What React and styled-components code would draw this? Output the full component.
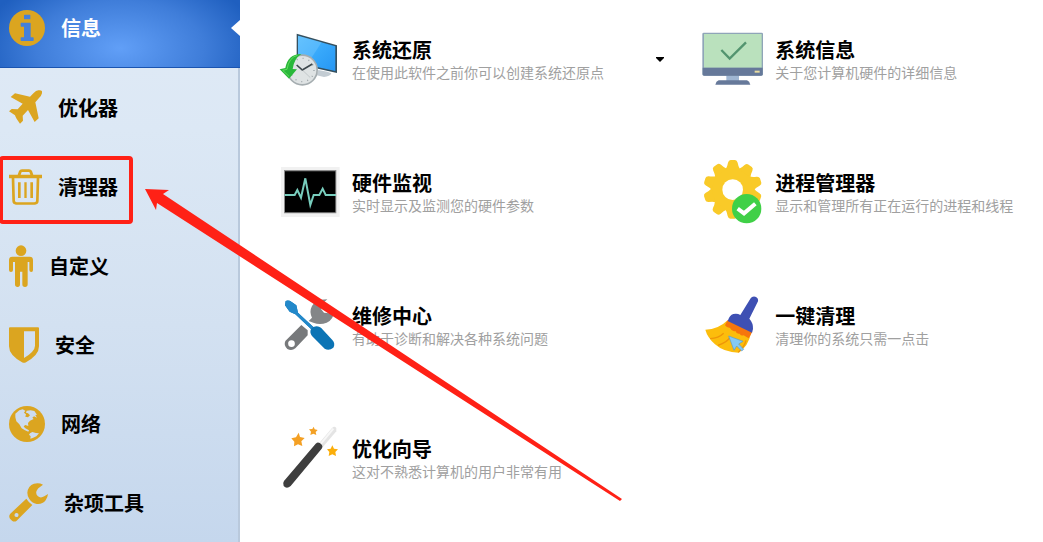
import React, { useState } from 'react';
import styled, { createGlobalStyle } from 'styled-components';

const GlobalStyle = createGlobalStyle`
  * {
    box-sizing: border-box;
  }

  body {
    margin: 0;
    background: #ffffff;
    color: #000000;
    font-family: "Noto Sans CJK SC", "Liberation Sans", sans-serif;
  }

  button {
    font-family: inherit;
    border: none;
    background: none;
    cursor: pointer;
  }
`;

const Page = styled.div`
  position: relative;
  display: flex;
  min-height: 100vh;
`;

const Sidebar = styled.nav`
  flex: 0 0 240px;
  display: flex;
  flex-direction: column;
  background: linear-gradient(to bottom, #e0eaf5 0%, #dce8f5 24%, #d3e1f1 60%, #c5d7ed 100%);
  border-right: 2px solid #b9c9dc;
`;

const NavItem = styled.button`
  position: relative;
  display: flex;
  align-items: center;
  gap: 16px;
  height: 79px;
  padding: 0 0 0 9px;
  color: #000000;
  font-size: 20px;
  font-weight: bold;
  line-height: 24px;
  text-align: left;

  svg {
    display: block;
    flex: none;
    fill: #dba520;
  }

  &.active {
    height: 68px;
    margin-right: -2px;
    padding-bottom: 12px;
    color: #ffffff;
    background: radial-gradient(ellipse 140px 80px at 50% 72%, #619ff7 0%, #3f7dd9 60%, #1f5fbf 100%);
    border-bottom: 1px solid #1a54b0;
  }

  /* notch that points back from the content area */
  &.active::after {
    content: '';
    position: absolute;
    right: 0;
    top: 20px;
    border: solid transparent;
    border-width: 8px 9px 8px 0;
    border-right-color: #ffffff;
  }
`;

const Content = styled.main`
  flex: 1;
  display: grid;
  grid-template-columns: 5fr 4fr;
  grid-auto-rows: 64px;
  row-gap: 69px;
  padding: 29px 2px 20px 39px;
`;

const Tile = styled.div`
  display: flex;
  align-items: center;
  justify-content: space-between;
`;

const TileButton = styled.button`
  display: flex;
  align-items: center;
  gap: 9px;
  padding: 0;
  text-align: left;
  white-space: nowrap;

  svg {
    display: block;
    flex: none;
    overflow: visible;
  }
`;

const TileText = styled.span`
  display: flex;
  flex-direction: column;
`;

const TileTitle = styled.span`
  color: #000000;
  font-size: 20px;
  font-weight: bold;
  line-height: 22px;
`;

const TileNote = styled.span`
  color: #a0a0a0;
  font-size: 14px;
  line-height: 22px;
`;

const MenuButton = styled.button`
  display: flex;
  align-items: center;
  justify-content: center;
  width: 24px;
  height: 24px;
  margin-right: 30px;
  padding: 0 0 3px;
`;

const Overlay = styled.svg`
  position: absolute;
  left: 0;
  top: 0;
  pointer-events: none;
`;

const InfoIcon = () => (
  <svg width="36" height="36" viewBox="28 30 108 108" aria-hidden="true">
    <circle cx="82" cy="84" r="54" />
    <path d="M75 44H90Q92 44 92 46V56Q92 58 90 58H75Q73 58 73 56V46Q73 44 75 44ZM65 68H91Q93 68 93 70V112H100Q102 112 102 114V121Q102 123 100 123H65Q63 123 63 121V114Q63 112 65 112H73V80H65Q63 80 63 78V70Q63 68 65 68Z" fill="#4480db" />
  </svg>
);

const PlaneIcon = () => (
  <svg width="33" height="36" viewBox="27 268 99 108" aria-hidden="true">
    <path d="M126 272Q124 268 115 269Q108 270 101 277L90 288L45 278L32 289L68 309L53 326L35 325L27 332L45 344Q47 352 60 369L69 360L68 345L84 328L104 364L116 353L106 305L117 292Q128 281 126 272Z" />
  </svg>
);

const TrashIcon = () => (
  <svg width="33" height="36" viewBox="27 101 99 108" aria-hidden="true">
    <path d="M27 118H53L57 107Q59 102 66 102H87Q94 102 96 107L100 118H126V129H118L116 198Q115 208 105 208H48Q38 208 37 198L35 129H27ZM62 118H91L88 110H65ZM43 129L45 196Q46 201 51 201H102Q108 201 108 196L110 129Z" fillRule="evenodd" />
    <path d="M54 141H62V188H54ZM73 141H80V188H73ZM91 141H99V188H91Z" />
  </svg>
);

const PersonIcon = () => (
  <svg width="24" height="42" viewBox="27 332 72 126" aria-hidden="true">
    <circle cx="63" cy="349" r="16" />
    <path d="M37 367H89Q99 367 99 377V407Q99 413 94 413Q88 413 88 407V383H83V450Q83 458 75 458Q67 458 67 450V412H60V450Q60 458 53 458Q45 458 45 450V383H39V407Q39 413 33 413Q27 413 27 407V377Q27 367 37 367Z" />
  </svg>
);

const ShieldIcon = () => (
  <svg width="30" height="36" viewBox="27 97 90 108" aria-hidden="true">
    <path d="M30 98H114Q117 98 117 101V155Q117 181 78 203Q72 206 66 203Q27 181 27 155V101Q27 98 30 98ZM72 110V190Q105 170 105 153V110Z" fillRule="evenodd" />
  </svg>
);

const GlobeIcon = () => (
  <svg width="36" height="36" viewBox="27 336 108 108" aria-hidden="true">
    <circle cx="81" cy="390" r="54" />
    <g fill="#cddcef">
      <path d="M46 359L58 349L68 346L76 350L72 356L78 361L76 368L84 370L90 364L84 358L78 356L80 350L92 349L103 351L111 362L106 363L111 371L102 367L97 371L101 375L90 380L84 387L85 396L76 393L71 397L75 402L80 405L87 409L85 413L75 409L65 403L58 391L49 382L46 370Z" />
      <path d="M90 418L97 414L108 417L117 418L109 427L98 432L91 434L92 427L87 422Z" />
    </g>
  </svg>
);

const WrenchIcon = () => (
  <svg width="39" height="39" viewBox="27 573 117 117" aria-hidden="true">
    <path d="M129 578Q117 571 102 575Q84 581 82 602Q82 613 88 621Q95 633 110 636Q127 638 137 625Q143 616 144 606L133 613Q121 620 113 612Q106 605 110 596Q113 589 121 584Z" />
    <path d="M79 620L31 665Q25 672 30 680L36 686Q43 691 50 686L97 639Q86 631 79 620ZM50 663A6 6 0 1 1 49 675A6 6 0 0 1 50 663Z" fillRule="evenodd" />
  </svg>
);

const RestoreIcon = () => (
  <svg width="64" height="64" viewBox="27 27 192 192" aria-hidden="true">
    <defs>
      <linearGradient id="screenBlue" x1="0" y1="0" x2="1" y2="1">
        <stop offset="0" stopColor="#58bdfd" />
        <stop offset="0.5" stopColor="#38a9fb" />
        <stop offset="1" stopColor="#2696f3" />
      </linearGradient>
    </defs>
    <path d="M145 150L172 155L184 160Q180 170 162 171L140 166Z" fill="#c3ccd3" />
    <path d="M80 41L201 76V159L80 132Z" fill="#35505f" />
    <path d="M84 47L196 79V153L84 128Z" fill="url(#screenBlue)" />
    <path d="M84 47L155 67L111 134L84 128Z" fill="#7bcbff" opacity="0.4" />
    <circle cx="97" cy="150" r="47" fill="#a5adb0" />
    <circle cx="97" cy="150" r="42" fill="#dfe3e4" />
    <circle cx="97" cy="150" r="35" fill="none" stroke="#9aa3a7" strokeWidth="4" strokeDasharray="3 15.3" />
    <path d="M80 135L97 150L127 132" fill="none" stroke="#3d474c" strokeWidth="5" />
    <path d="M97 150L121 173" stroke="#b3babd" strokeWidth="2" />
    <path d="M94 102Q54 101 46 144L29 148L57 176L81 148L68 147Q72 116 94 102Z" fill="#29b83a" />
    <path d="M82 106Q57 112 51 148L38 151L57 169" fill="none" stroke="#62da5d" strokeWidth="3" />
  </svg>
);

const MonitorIcon = () => (
  <svg width="64" height="64" viewBox="27 21 192 192" aria-hidden="true">
    <path d="M33 36H209V186H33Z" fill="#f1f1f1" />
    <path d="M42 45H199V175H42Z" fill="#8c8c8c" />
    <path d="M45 49H196V172H45Z" fill="#000000" />
    <path d="M44 120H74L82 105L93 128L106 70L121 150L131 120H148L158 101L167 120H198" fill="none" stroke="#78cdbd" strokeWidth="6" />
  </svg>
);

const RepairIcon = () => (
  <svg width="64" height="64" viewBox="27 30 192 192" aria-hidden="true">
    <path d="M144 45L172 43L155 58L153 72L162 83L178 85L192 79Q191 105 170 113Q150 121 130 113L116 108L126 98Q117 79 126 63Q134 51 144 45Z" fill="#848688" />
    <path d="M94 120L113 136V151L76 190Q65 199 52 192Q40 181 46 168ZM64 166A10 10 0 1 0 65 186A10 10 0 0 0 64 166Z" fill="#77797b" fillRule="evenodd" />
    <path d="M47 48Q55 44 65 51L79 61L84 83L130 126Q143 120 153 128L187 165Q197 176 190 188Q177 199 164 191L126 153Q118 143 123 132L76 88L59 80L45 61Z" fill="#0b74b5" />
    <path d="M47 48Q55 44 65 51L79 61L84 83L130 126L123 132L76 88L59 80L45 61Z" fill="#2389ca" />
  </svg>
);

const WandIcon = () => (
  <svg width="64" height="64" viewBox="27 39 192 192" aria-hidden="true">
    <path d="M146 86L186 39Q193 32 199 39V49L158 97Z" fill="#e4e4e4" />
    <path d="M151 88L190 41" stroke="#f7f7f7" strokeWidth="6" />
    <path d="M141 83Q148 81 154 88Q160 95 155 101L62 213Q50 223 41 213Q37 205 42 198L137 86Z" fill="#3e3e3e" />
    <path d="M86 53L90 66L104 69L94 79L97 93L84 88L72 94L73 80L64 70L78 67Z" fill="#f4a024" />
    <path d="M131 35L134 43L143 45L137 51L139 60L130 56L121 60L123 50L117 43L127 42Z" fill="#f3a125" />
    <path d="M187 91L192 101L204 103L196 111L198 123L187 118L176 123L178 111L171 103L182 101Z" fill="#fbae0a" />
  </svg>
);

const SystemInfoIcon = () => (
  <svg width="64" height="64" viewBox="36 27 192 192" aria-hidden="true">
    <path d="M109 165H147V184H109Z" fill="#9fb6d3" />
    <path d="M86 181H171Q179 184 181 194H76Q78 184 86 181Z" fill="#66799a" />
    <rect x="37" y="38" width="182" height="129" rx="4" fill="#8fa5b8" />
    <path d="M42 42H215V143H42Z" fill="#bae1bd" />
    <path d="M38 143H218V162Q218 167 213 167H43Q38 167 38 162Z" fill="#66799a" />
    <path d="M194 152H209V158H194Z" fill="#e9dda0" />
    <path d="M94 90L119 116L168 67" fill="none" stroke="#53946f" strokeWidth="7" />
  </svg>
);

const gearTeeth = [0, 36, 72, 108, 144, 180, 216, 252, 288, 324];

const ProcessIcon = () => (
  <svg width="64" height="64" viewBox="36 36 192 192" aria-hidden="true">
    <defs>
      <mask id="gearHole">
        <path d="M30 20H230V220H30Z" fill="#fff" />
        <circle cx="128" cy="119" r="31" fill="#000" />
      </mask>
    </defs>
    <g fill="#f9ca28" mask="url(#gearHole)">
      <circle cx="128" cy="118" r="65" />
      {gearTeeth.map((angle) => (
        <path
          key={angle}
          d="M107 58Q112 50 114 38Q116 30 122 30H135Q141 30 143 38Q145 50 150 58Z"
          transform={`rotate(${angle} 128 118)`}
        />
      ))}
    </g>
    <circle cx="170" cy="176" r="44" fill="#40d047" />
    <path d="M143 176L162 190L196 161" fill="none" stroke="#ffffff" strokeWidth="12" />
  </svg>
);

const BroomIcon = () => (
  <svg width="64" height="64" viewBox="36 30 192 192" aria-hidden="true">
    <path d="M111 107Q86 132 46 134Q52 157 75 178Q103 203 146 203Q175 184 183 145Z" fill="#fcbd0c" />
    <path d="M113 105L187 140Q181 151 176 160L161 151Q153 154 149 146Q140 148 136 138Q127 142 120 129Q109 128 105 121Z" fill="#f6760c" />
    <path d="M60 161Q86 160 101 145M84 181Q112 172 119 158M145 202Q164 184 168 166" fill="none" stroke="#ef9609" strokeWidth="4" />
    <path d="M182 40Q186 33 196 35Q206 39 204 49L178 101Q190 114 189 132L186 143L113 108Q119 90 130 87Q142 84 151 90Z" fill="#3e50b3" />
    <path d="M116 153L159 169L146 177L161 193L155 198L140 183L132 196Z" fill="#84c9f5" stroke="#5a9ccb" strokeWidth="2" />
  </svg>
);

const navItems = [
  { label: '信息', Icon: InfoIcon },
  { label: '优化器', Icon: PlaneIcon },
  { label: '清理器', Icon: TrashIcon },
  { label: '自定义', Icon: PersonIcon },
  { label: '安全', Icon: ShieldIcon },
  { label: '网络', Icon: GlobeIcon },
  { label: '杂项工具', Icon: WrenchIcon },
];

const tiles = [
  { title: '系统还原', note: '在使用此软件之前你可以创建系统还原点', Icon: RestoreIcon, hasMenu: true },
  { title: '系统信息', note: '关于您计算机硬件的详细信息', Icon: SystemInfoIcon },
  { title: '硬件监视', note: '实时显示及监测您的硬件参数', Icon: MonitorIcon },
  { title: '进程管理器', note: '显示和管理所有正在运行的进程和线程', Icon: ProcessIcon },
  { title: '维修中心', note: '有助于诊断和解决各种系统问题', Icon: RepairIcon },
  { title: '一键清理', note: '清理你的系统只需一点击', Icon: BroomIcon },
  { title: '优化向导', note: '这对不熟悉计算机的用户非常有用', Icon: WandIcon },
];

const App = () => {
  const [active, setActive] = useState('信息');

  return (
    <Page>
      <GlobalStyle />
      <Sidebar>
        {navItems.map(({ label, Icon }) => (
          <NavItem
            key={label}
            type="button"
            className={label === active ? 'active' : ''}
            onClick={() => setActive(label)}
          >
            <Icon />
            {label}
          </NavItem>
        ))}
      </Sidebar>
      <Content>
        {tiles.map(({ title, note, Icon, hasMenu }) => (
          <Tile key={title}>
            <TileButton type="button">
              <Icon />
              <TileText>
                <TileTitle>{title}</TileTitle>
                <TileNote>{note}</TileNote>
              </TileText>
            </TileButton>
            {hasMenu && (
              <MenuButton type="button" aria-haspopup="menu" aria-label={title}>
                <svg width="8" height="5" viewBox="0 0 8 5" aria-hidden="true">
                  <path d="M0 0H8V1L4 5L0 1Z" />
                </svg>
              </MenuButton>
            )}
          </Tile>
        ))}
      </Content>
      {/* red frame and arrow on the cleaner entry */}
      <Overlay width="630" height="510" viewBox="0 0 630 510" aria-hidden="true">
        <rect x="1" y="158" width="130" height="64" rx="2" fill="none" stroke="#ff2116" strokeWidth="4" />
        <path d="M145 189L169 190L163 194L622 499L620 501L157 203L156 210Z" fill="#ff2116" />
      </Overlay>
    </Page>
  );
};

export default App;
